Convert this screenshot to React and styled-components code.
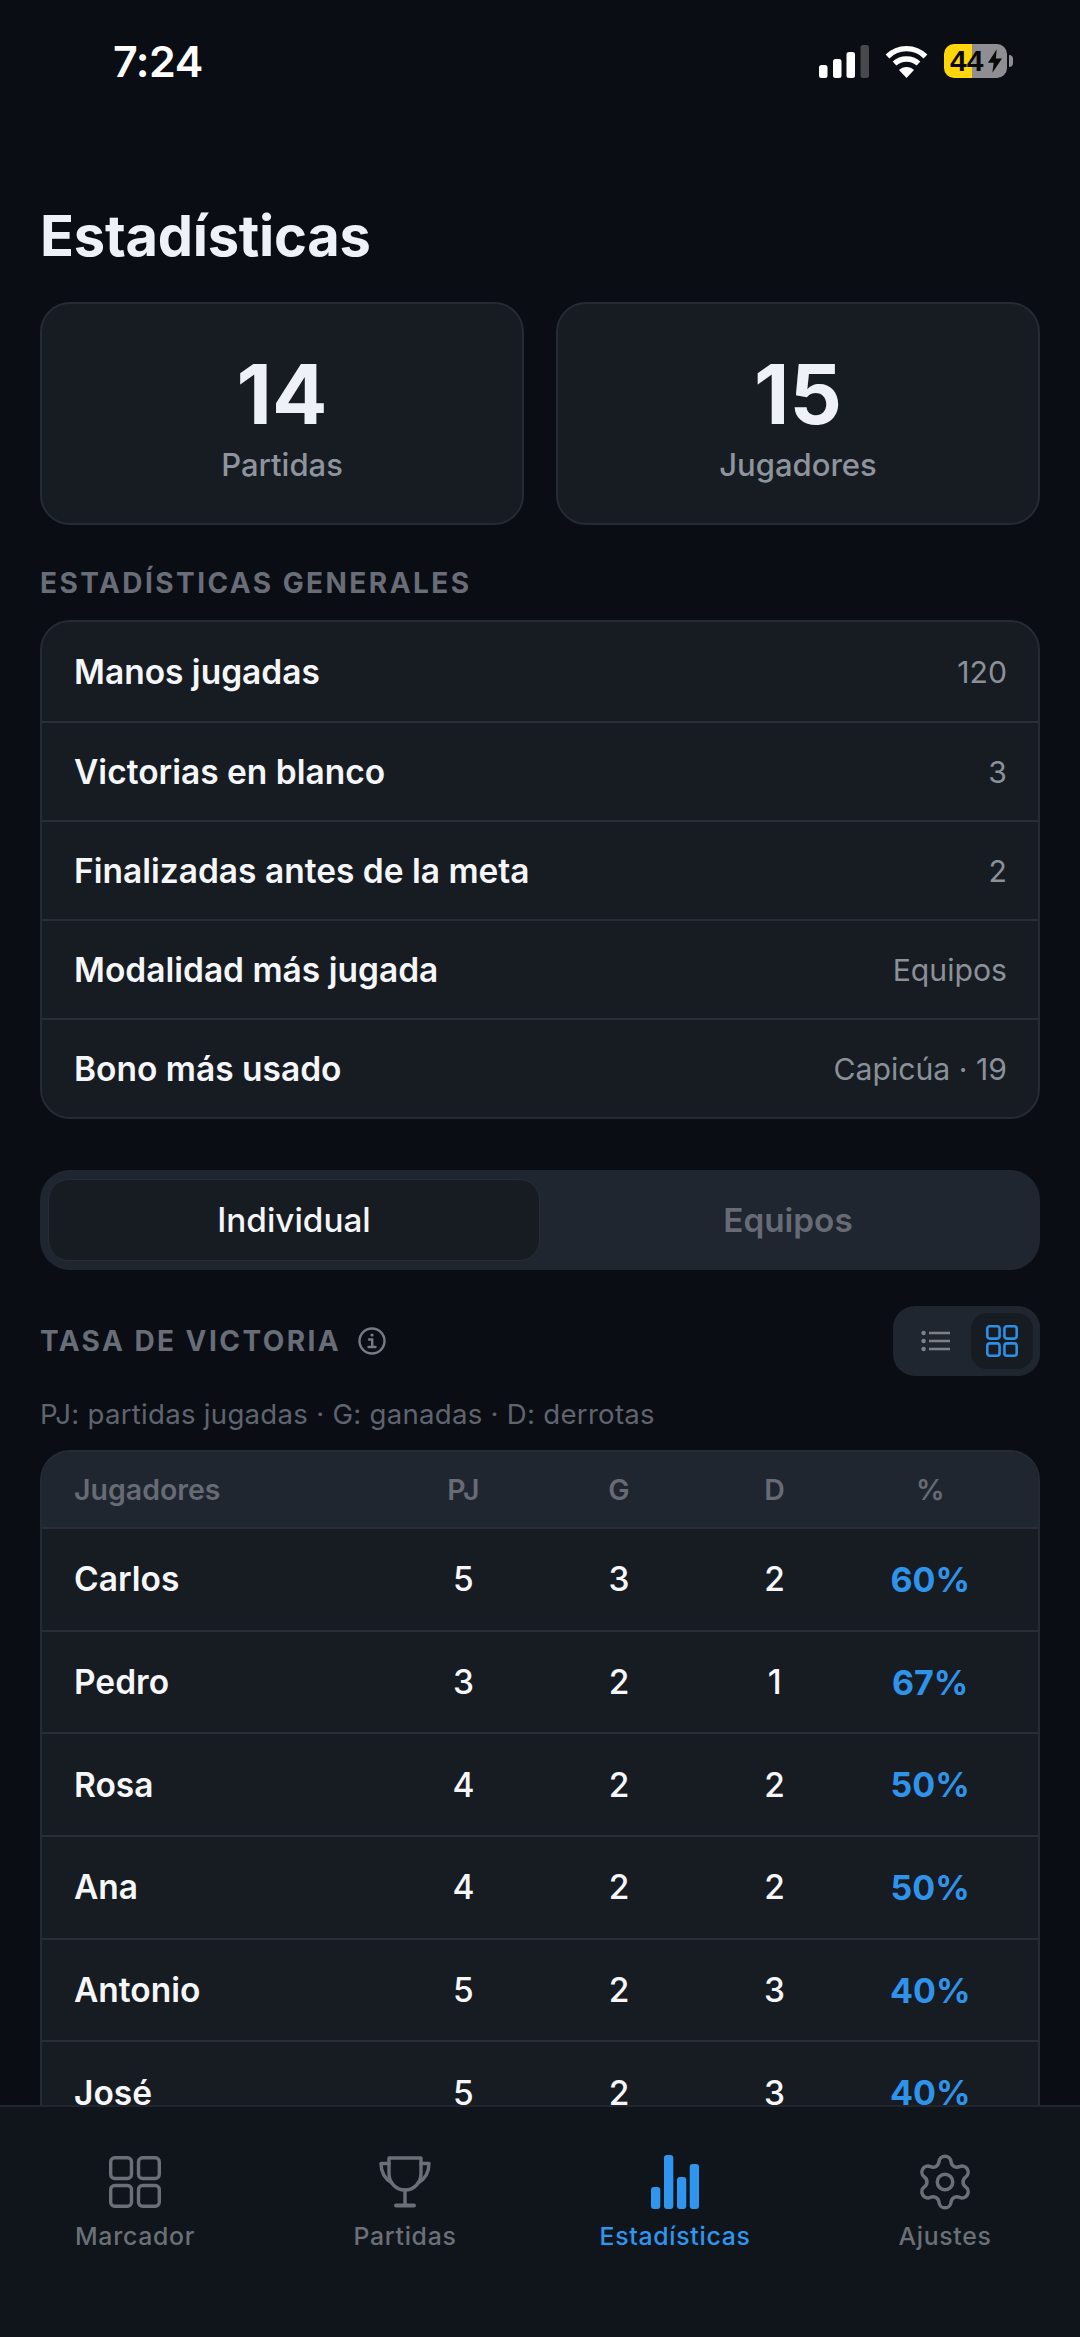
import React from "react";
import styled, { createGlobalStyle } from "styled-components";
import { Settings } from "lucide-react";

const Global = createGlobalStyle`
  html, body { margin: 0; padding: 0; background: #0a0d14; }
  body { font-family: Inter, "Liberation Sans", sans-serif; -webkit-font-smoothing: antialiased; }
`;
const Page = styled.div`
  position: relative; width: 1080px; height: 2337px; overflow: hidden; background: #0a0d14; color: #f2f4f8;
`;
const StatusBar = styled.div`
  height: 120px; display: flex; align-items: center; justify-content: space-between; padding: 2px 67px 0 113px; box-sizing: border-box;
`;
const Time = styled.span`font-size: 43px; font-weight: 600; color: #fff; line-height: 1; letter-spacing: -0.5px;`;
const StatusIcons = styled.div`display: flex; align-items: center; gap: 16px;`;
const Battery = styled.div`
  position: relative; width: 63px; height: 34px; border-radius: 10px; overflow: hidden;
  background: linear-gradient(90deg, #ffd60a 0 28px, #8e8e93 28px 63px);
  display: flex; align-items: center; padding-left: 6px; box-sizing: border-box; gap: 5px;
  color: #0a0a0a; font-size: 30px; font-weight: 700; line-height: 1; font-family: "Liberation Sans", sans-serif;
`;
const BatteryWrap = styled.div`display: flex; align-items: center; gap: 2px;`;
const Nub = styled.div`width: 4px; height: 12px; border-radius: 0 4px 4px 0; background: #8e8e93;`;
const Main = styled.main`padding: 0 40px;`;
const Title = styled.h1`margin: 81px 0 0; height: 70px; font-size: 56px; line-height: 70px; font-weight: 700; letter-spacing: -0.25px; color: #eef1f7;`;
const Stats = styled.div`display: grid; grid-template-columns: 1fr 1fr; gap: 32px; margin-top: 31px;`;
const StatCard = styled.div`
  height: 223px; box-sizing: border-box; border: 2px solid #252b34; border-radius: 30px; background: #171c22;
  display: flex; flex-direction: column; align-items: center; padding-top: 45px;
`;
const StatNumber = styled.div`font-size: 82px; line-height: 92px; font-weight: 700; color: #eef1f7;`;
const StatLabel = styled.div`font-size: 31px; line-height: 38px; margin-top: 5px; font-weight: 500; color: #8e949e;`;
const SectionLabel = styled.div`
  font-size: 28px; line-height: 34px; font-weight: 700; letter-spacing: 2.45px; color: #686d77; text-transform: uppercase;
`;
const GeneralLabel = styled(SectionLabel)`margin-top: 41px;`;
const ListCard = styled.div`
  margin-top: 20px; border: 2px solid #252b34; border-radius: 30px; background: #171c22; overflow: hidden;
`;
const ListRow = styled.div`
  height: 99px; box-sizing: border-box; display: flex; align-items: center; justify-content: space-between; padding: 0 31px 0 32px;
  & + & { border-top: 2px solid #282e37; }
`;
const ListName = styled.span`font-size: 33.5px; font-weight: 600; color: #f4f6fa;`;
const ListValue = styled.span`font-size: 30.2px; font-weight: 400; color: #8b9099;`;
const Segmented = styled.div`
  margin-top: 51px; height: 100px; box-sizing: border-box; padding: 10px 3px 10px 9px; background: #20262f; border-radius: 30px;
  display: grid; grid-template-columns: 490px 1fr;
`;
const Segment = styled.div`
  display: flex; align-items: center; justify-content: center; border-radius: 20px; font-size: 33.3px; font-weight: ${p => p.$active ? 500 : 600};
  color: ${p => p.$active ? "#f4f6fa" : "#666b75"};
  background: ${p => p.$active ? "#171c22" : "transparent"};
  box-shadow: ${p => p.$active ? "0 0 0 1px #262c35" : "none"};
`;
const RateHeader = styled.div`margin-top: 36px; display: flex; align-items: center; justify-content: space-between; height: 70px;`;
const RateTitle = styled.div`display: flex; align-items: center; gap: 17px;`;
const ViewToggle = styled.div`
  width: 147px; height: 70px; box-sizing: border-box; background: #20262f; border-radius: 22px; padding: 7px; display: flex; justify-content: flex-end; align-items: stretch;
`;
const ListToggle = styled.div`flex: 1; display: flex; align-items: center; justify-content: center;`;
const GridToggle = styled.div`width: 62px; border-radius: 16px; background: #171c22; display: flex; align-items: center; justify-content: center;`;
const Legend = styled.div`margin-top: 21px; font-size: 27.6px; line-height: 34px; color: #5f646e; letter-spacing: 0.27px;`;
const Table = styled.div`
  margin-top: 19px; border: 2px solid #252b34; border-bottom: none; border-radius: 30px 30px 0 0; background: #171c22; overflow: hidden;
`;
const cols = `grid-template-columns: 1fr repeat(4, 155.6px); padding: 0 30px 0 32px; align-items: center;`;
const TableHead = styled.div`
  display: grid; ${cols} height: 77px; background: #20262f; font-size: 28.5px; font-weight: 600; color: #666b75;
  border-bottom: 2px solid #282e37; box-sizing: border-box;
`;
const TableRow = styled.div`
  display: grid; ${cols} height: 102.7px; box-sizing: border-box; border-bottom: 2px solid #282e37;
`;
const HeadCell = styled.div`text-align: center;`;
const HeadName = styled.div``;
const PlayerName = styled.div`font-size: 33.5px; font-weight: 600; color: #f6f7fa;`;
const Num = styled.div`text-align: center; font-size: 33.5px; font-weight: 500; color: #f6f7fa;`;
const Pct = styled.div`text-align: center; font-size: 34px; font-weight: 700; color: #2f93ea;`;
const TabBar = styled.nav`
  position: absolute; left: 0; right: 0; bottom: 0; height: 232px; box-sizing: border-box; background: #10151b; border-top: 2px solid #21262e;
  display: grid; grid-template-columns: repeat(4, 1fr); padding-top: 44px;
`;
const Tab = styled.div`
  display: flex; flex-direction: column; align-items: center; color: ${p => p.$active ? "#2f95ee" : "#6b6f77"};
`;
const TabIcon = styled.div`height: 62px; display: flex; align-items: center; justify-content: center;`;
const TabLabel = styled.span`margin-top: 7px; font-size: 24.8px; line-height: 32px; font-weight: 500; letter-spacing: 0.7px;`;

const SignalIcon = () => (
  <svg width="50" height="33" viewBox="0 0 50 33">
    <rect x="0" y="20" width="8.5" height="13" rx="2.5" fill="#fff" />
    <rect x="14" y="14" width="8.5" height="19" rx="2.5" fill="#fff" />
    <rect x="27.5" y="7" width="8.5" height="26" rx="2.5" fill="#fff" />
    <rect x="41.5" y="0" width="8.5" height="33" rx="2.5" fill="#48494f" />
  </svg>
);
const WifiIcon = () => (
  <svg width="43" height="33" viewBox="0 0 43 33" fill="none" stroke="#fff" strokeWidth="5.4">
    <path d="M2.5 11.5C13 1 30 1 40.5 11.5" />
    <path d="M9.5 18.5C16 12.5 27 12.5 33.5 18.5" />
    <path d="M21.5 33L14 25C18 21 25 21 29 25Z" fill="#fff" stroke="none" />
  </svg>
);
const BoltIcon = () => (
  <svg width="14" height="24" viewBox="0 0 16 27">
    <path d="M10 0L0 15.5H6.5L5 27L16 10.5H9Z" fill="#0a0a0a" />
  </svg>
);
const InfoIcon = () => (
  <svg width="28" height="28" viewBox="0 0 28 28" fill="none" stroke="#767a82" strokeWidth="2.4">
    <circle cx="14" cy="14" r="12.5" />
    <path d="M11 12.5h3.2v7M10.5 20h7" strokeLinecap="round" />
    <circle cx="14" cy="8" r="1.6" fill="#767a82" stroke="none" />
  </svg>
);
const ListGlyph = () => (
  <svg width="30" height="22" viewBox="0 0 30 22" stroke="#7d8187" strokeWidth="2.4" fill="#7d8187">
    <circle cx="2.6" cy="3" r="2.2" stroke="none" />
    <circle cx="2.6" cy="11" r="2.2" stroke="none" />
    <circle cx="2.6" cy="19" r="2.2" stroke="none" />
    <path d="M8 3h21M8 11h21M8 19h21" />
  </svg>
);
const GridGlyph = ({ size, color, stroke, radius }) => {
  const g = size * 0.07;
  const s = (size - g - stroke * 2) / 2;
  const a = stroke / 2;
  const b = a + s + stroke + g;
  return (
    <svg width={size} height={size} viewBox={`0 0 ${size} ${size}`} fill="none" stroke={color} strokeWidth={stroke}>
      <rect x={a} y={a} width={s} height={s} rx={radius} />
      <rect x={b} y={a} width={s} height={s} rx={radius} />
      <rect x={a} y={b} width={s} height={s} rx={radius} />
      <rect x={b} y={b} width={s} height={s} rx={radius} />
    </svg>
  );
};
const TrophyIcon = () => (
  <svg width="52" height="52" viewBox="0 0 52 52" fill="none" stroke="currentColor" strokeWidth="3.4" strokeLinejoin="round" strokeLinecap="round">
    <path d="M10 2H42V17C42 27 35 34 26 34C17 34 10 27 10 17Z" />
    <path d="M10 7.5H2C2 16 6 23 13 27" />
    <path d="M42 7.5H50C50 16 46 23 39 27" />
    <path d="M26 34V49" />
    <path d="M17 49.5H35" strokeWidth="4" />
  </svg>
);
const BarsIcon = () => (
  <svg width="48" height="54" viewBox="0 0 48 54" fill="currentColor">
    <rect x="0" y="32" width="9.3" height="22" rx="3" />
    <rect x="13" y="0" width="9.3" height="54" rx="3" />
    <rect x="26" y="22" width="9.3" height="32" rx="3" />
    <rect x="38.7" y="9" width="9.3" height="45" rx="3" />
  </svg>
);

const general = [
  ["Manos jugadas", "120"],
  ["Victorias en blanco", "3"],
  ["Finalizadas antes de la meta", "2"],
  ["Modalidad más jugada", "Equipos"],
  ["Bono más usado", "Capicúa · 19"],
];
const players = [
  ["Carlos", 5, 3, 2, "60%"],
  ["Pedro", 3, 2, 1, "67%"],
  ["Rosa", 4, 2, 2, "50%"],
  ["Ana", 4, 2, 2, "50%"],
  ["Antonio", 5, 2, 3, "40%"],
  ["José", 5, 2, 3, "40%"],
];

export default function App() {
  return (
    <Page>
      <Global />
      <StatusBar>
        <Time>7:24</Time>
        <StatusIcons>
          <SignalIcon />
          <WifiIcon />
          <BatteryWrap>
            <Battery>44<BoltIcon /></Battery>
            <Nub />
          </BatteryWrap>
        </StatusIcons>
      </StatusBar>
      <Main>
        <Title>Estadísticas</Title>
        <Stats>
          <StatCard><StatNumber>14</StatNumber><StatLabel>Partidas</StatLabel></StatCard>
          <StatCard><StatNumber>15</StatNumber><StatLabel>Jugadores</StatLabel></StatCard>
        </Stats>
        <GeneralLabel>Estadísticas generales</GeneralLabel>
        <ListCard>
          {general.map(([n, v]) => (
            <ListRow key={n}><ListName>{n}</ListName><ListValue>{v}</ListValue></ListRow>
          ))}
        </ListCard>
        <Segmented>
          <Segment $active>Individual</Segment>
          <Segment>Equipos</Segment>
        </Segmented>
        <RateHeader>
          <RateTitle><SectionLabel>Tasa de victoria</SectionLabel><InfoIcon /></RateTitle>
          <ViewToggle>
            <ListToggle><ListGlyph /></ListToggle>
            <GridToggle><GridGlyph size={32} color="#2f8fe6" stroke={2.6} radius={2.5} /></GridToggle>
          </ViewToggle>
        </RateHeader>
        <Legend>PJ: partidas jugadas · G: ganadas · D: derrotas</Legend>
        <Table>
          <TableHead>
            <HeadName>Jugadores</HeadName>
            <HeadCell>PJ</HeadCell><HeadCell>G</HeadCell><HeadCell>D</HeadCell><HeadCell>%</HeadCell>
          </TableHead>
          {players.map(([n, pj, g, d, pct]) => (
            <TableRow key={n}>
              <PlayerName>{n}</PlayerName>
              <Num>{pj}</Num><Num>{g}</Num><Num>{d}</Num><Pct>{pct}</Pct>
            </TableRow>
          ))}
        </Table>
      </Main>
      <TabBar>
        <Tab>
          <TabIcon><GridGlyph size={52} color="currentColor" stroke={3.4} radius={4} /></TabIcon>
          <TabLabel>Marcador</TabLabel>
        </Tab>
        <Tab>
          <TabIcon><TrophyIcon /></TabIcon>
          <TabLabel>Partidas</TabLabel>
        </Tab>
        <Tab $active>
          <TabIcon><BarsIcon /></TabIcon>
          <TabLabel>Estadísticas</TabLabel>
        </Tab>
        <Tab>
          <TabIcon><Settings size={62} strokeWidth={1.35} /></TabIcon>
          <TabLabel>Ajustes</TabLabel>
        </Tab>
      </TabBar>
    </Page>
  );
}
